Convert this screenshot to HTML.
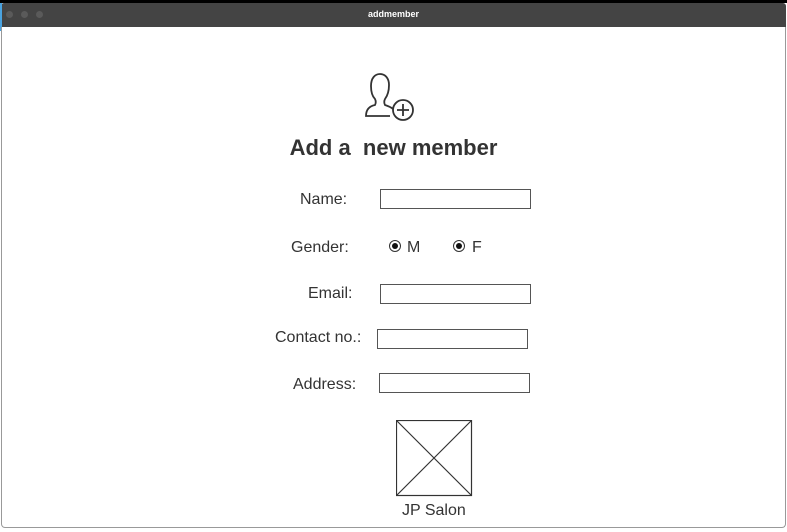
<!DOCTYPE html>
<html><head><style>
*{margin:0;padding:0;box-sizing:border-box}
body{width:787px;height:532px;background:#fff;position:relative;overflow:hidden;font-family:"Liberation Sans",sans-serif;color:#333}
.top{position:absolute;left:0;top:0;width:787px;height:3px;background:#000}
.bar{position:absolute;left:1px;top:3px;width:785px;height:24px;background:#444;border-radius:3px 3px 0 0}
.dot{position:absolute;top:8px;width:7px;height:7px;border-radius:50%;background:#5a5a5a}
.title{position:absolute;left:0;width:785px;top:6px;text-align:center;color:#fff;font-size:9px;font-weight:bold}
.win{position:absolute;left:1px;top:27px;width:785px;height:501px;border:1px solid #999;border-top:none;border-radius:0 0 4px 4px}
.blue{position:absolute;left:0;top:3px;width:2px;height:28px;background:#4aa3e0}
.l{position:absolute;font-size:16px;color:#333}
.in{position:absolute;height:20px;border:1px solid #555;background:#fff;width:151px}
.r{position:absolute;top:240px;width:12px;height:12px;border:1px solid #333;border-radius:50%}
.r::after{content:"";position:absolute;left:2px;top:2px;width:6px;height:6px;border-radius:50%;background:#111}
h1{position:absolute;left:0;width:787px;top:135px;text-align:center;font-size:22px;font-weight:bold;color:#333;white-space:pre}
</style></head><body>
<div class="top"></div>
<div class="bar"><div class="dot" style="left:5px"></div><div class="dot" style="left:20px"></div><div class="dot" style="left:35px"></div><div class="title">addmember</div></div>
<div class="blue"></div>
<div class="win"></div>
<svg style="position:absolute;left:362px;top:72px" width="56" height="52" viewBox="0 0 56 52" fill="none" stroke="#333" stroke-width="1.8">
<path d="M28 44 H4 C4 37 8 34 13 33 C14 31 14 29 13 27 C10 24 9 20 9 14 C9 6 13 2 18 2 C23 2 27 6 27 13 C27 19 26 23 23 27 C22 29 22 31 23 33 C26 34 29 35 31 37"/>
<circle cx="41" cy="38" r="10"/><path d="M41 32 V44 M35 38 H47"/>
</svg>
<h1>Add a  new member</h1>
<div class="l" style="left:300px;top:191px">Name:</div><div class="in" style="left:380px;top:189px"></div>
<div class="l" style="left:291px;top:239px">Gender:</div>
<div class="r" style="left:389px"></div><div class="l" style="left:407px;top:239px">M</div>
<div class="r" style="left:453px"></div><div class="l" style="left:472px;top:239px">F</div>
<div class="l" style="left:308px;top:285px">Email:</div><div class="in" style="left:380px;top:284px"></div>
<div class="l" style="left:275px;top:329px">Contact no.:</div><div class="in" style="left:377px;top:329px"></div>
<div class="l" style="left:293px;top:376px">Address:</div><div class="in" style="left:379px;top:373px"></div>
<svg style="position:absolute;left:396px;top:420px" width="77" height="77" viewBox="0 0 77 77" fill="none" stroke="#333" stroke-width="1.2">
<rect x="0.5" y="0.5" width="75" height="75"/><path d="M0.5 0.5 L75.5 75.5 M75.5 0.5 L0.5 75.5"/></svg>
<div class="l" style="left:402px;top:502px">JP Salon</div>
</body></html>
